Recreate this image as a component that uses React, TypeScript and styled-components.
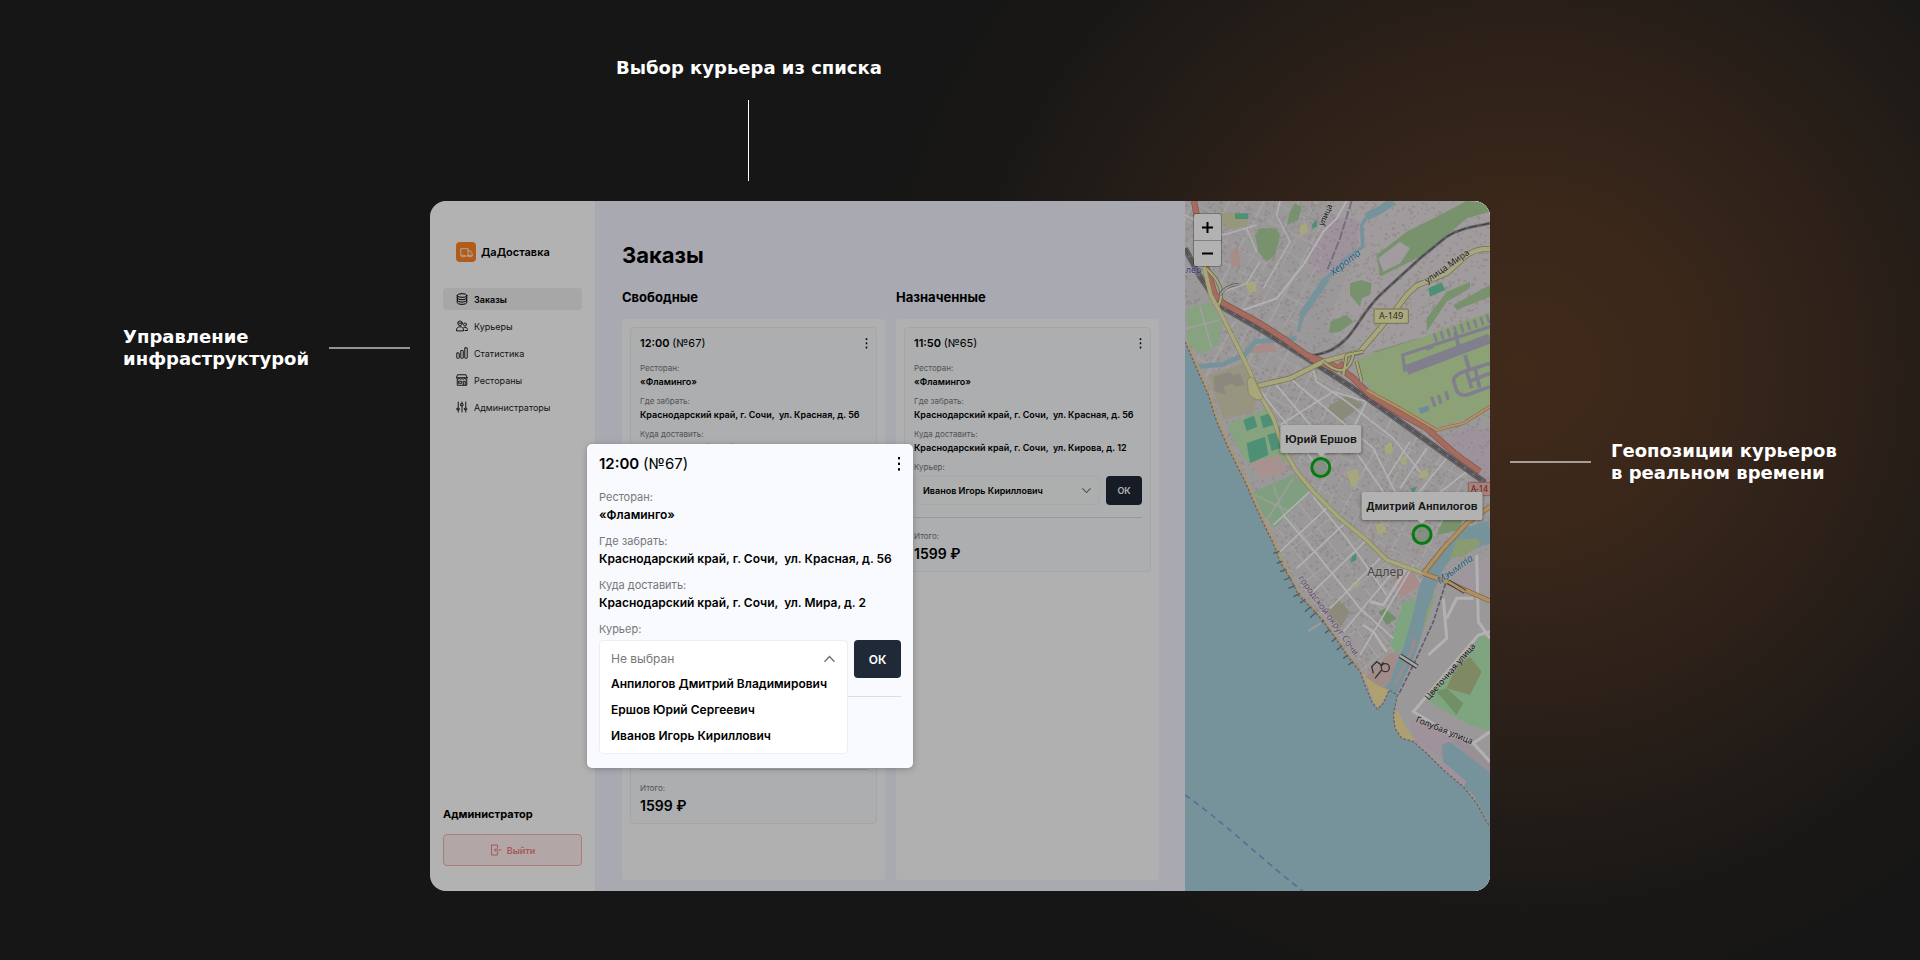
import React from "react";
import styled, { createGlobalStyle } from "styled-components";

const GlobalStyle = createGlobalStyle`
  *, *::before, *::after { box-sizing: border-box; }
  body {
    margin: 0;
    background: #161616;
    font-family: Inter, "Liberation Sans", sans-serif;
    color: #000;
  }
  button, select { font-family: inherit; }
  h1, h2, h3, p, dl, dd, ul { margin: 0; padding: 0; }
  ul { list-style: none; }
`;

/* ---------- page and callouts ---------- */

const Page = styled.main`
  min-height: 100vh;
  display: grid;
  grid-template-columns: minmax(0, 1fr) minmax(0, 1060px) minmax(0, 1fr);
  grid-template-rows: 201px auto;
  padding-bottom: 69px;
  background:
    radial-gradient(ellipse 700px 680px at 1520px 370px, #402a1a 0%, #3a271a 25%, rgba(52, 36, 26, 0.72) 50%, rgba(32, 27, 23, 0.4) 78%, rgba(22, 22, 22, 0) 100%),
    #161616;
`;

const CalloutText = styled.p`
  color: #fff;
  font-family: "DejaVu Sans", sans-serif;
  font-size: 18px;
  font-weight: 700;
  line-height: 22px;
  white-space: nowrap;
`;

const CalloutRule = styled.span<{ $vertical?: boolean }>`
  flex: none;
  width: ${(p) => (p.$vertical ? "1px" : "81px")};
  height: ${(p) => (p.$vertical ? "81px" : "2px")};
  background: ${(p) => (p.$vertical ? "#fff" : "rgba(255, 255, 255, 0.55)")};
`;

const TopCallout = styled.aside`
  grid-column: 2;
  justify-self: start;
  align-self: end;
  display: flex;
  flex-direction: column;
  align-items: center;
  gap: 21px;
  margin-left: 186px;
  padding-bottom: 20px;
`;

const SideCallout = styled.aside<{ $side: "left" | "right" }>`
  grid-row: 2;
  grid-column: ${(p) => (p.$side === "left" ? 1 : 3)};
  justify-self: ${(p) => (p.$side === "left" ? "end" : "start")};
  align-self: start;
  display: flex;
  align-items: center;
  gap: 20px;
  margin: ${(p) => (p.$side === "left" ? "125px 20px 0 0" : "239px 0 0 20px")};
`;

/* ---------- application window ---------- */

const Window = styled.section`
  grid-column: 2;
  grid-row: 2;
  position: relative;
  display: grid;
  grid-template-columns: 165px minmax(0, 1fr) 305px;
  min-height: 690px;
  border-radius: 16px;
  overflow: hidden;
  background: #fff;
`;

const Shade = styled.div`
  position: absolute;
  inset: 0;
  background: rgba(0, 0, 0, 0.3);
`;

/* ---------- sidebar ---------- */

const Sidebar = styled.div`
  display: flex;
  flex-direction: column;
  padding: 41px 13px 25px;
`;

const Brand = styled.a`
  display: flex;
  align-items: center;
  gap: 5px;
  padding-left: 13px;
  color: #000;
  font-size: 11px;
  font-weight: 600;
  line-height: 20px;
  text-decoration: none;
`;

const BrandMark = styled.span`
  display: grid;
  place-items: center;
  width: 20px;
  height: 20px;
  border-radius: 4px;
  background: #ff8526;
`;

const Nav = styled.nav`
  display: flex;
  flex-direction: column;
  gap: 5px;
  margin-top: 26px;
`;

const NavItem = styled.a<{ $active?: boolean }>`
  display: flex;
  align-items: center;
  gap: 6px;
  height: 22px;
  padding: 0 13px;
  border-radius: 4px;
  background: ${(p) => (p.$active ? "#efefef" : "transparent")};
  color: ${(p) => (p.$active ? "#000" : "#222")};
  font-size: 9px;
  font-weight: ${(p) => (p.$active ? 600 : 400)};
  text-decoration: none;
`;

const Account = styled.div`
  display: flex;
  flex-direction: column;
  gap: 12px;
  margin-top: auto;
`;

const AccountName = styled.p`
  font-size: 11px;
  font-weight: 700;
  line-height: 16px;
`;

const LogoutButton = styled.button`
  display: flex;
  align-items: center;
  justify-content: center;
  gap: 5px;
  height: 32px;
  border: 1px solid #f7b0b2;
  border-radius: 4px;
  background: #ffeeee;
  color: #ee8080;
  font-size: 9px;
  font-weight: 600;
`;

/* ---------- orders ---------- */

const Orders = styled.div`
  display: flex;
  flex-direction: column;
  padding: 40px 26px 11px 27px;
  background: #f2f2ff;
`;

const Title = styled.h1`
  font-size: 22px;
  font-weight: 700;
  line-height: 28px;
`;

const Board = styled.div`
  flex: 1;
  display: grid;
  grid-template-columns: 1fr 1fr;
  gap: 11px;
  margin-top: 18px;
`;

const Column = styled.section`
  display: flex;
  flex-direction: column;
`;

const ColumnTitle = styled.h2`
  font-size: 13px;
  font-weight: 700;
  line-height: 20px;
`;

const Lane = styled.div`
  flex: 1;
  display: flex;
  flex-direction: column;
  margin-top: 12px;
  padding: 8px;
  border-radius: 4px;
  background: #fdfdfd;
`;

const Card = styled.article<{ $tall?: boolean }>`
  display: flex;
  flex-direction: column;
  min-height: ${(p) => (p.$tall ? "497px" : "0")};
  padding: 7px 8px 6px 9px;
  border: 1px solid #ebedf0;
  border-radius: 4px;
  background: #f6f9fb;
`;

const Modal = styled.article`
  position: absolute;
  left: 157px;
  top: 243px;
  width: 326px;
  min-height: 324px;
  padding: 10px 12px 14px;
  border-radius: 5px;
  background: #f8fafd;
  box-shadow: 0 1px 6px rgba(0, 0, 0, 0.25);
`;

const CardHead = styled.header`
  display: flex;
  align-items: center;
  justify-content: space-between;
`;

const OrderTime = styled.h3<{ $large?: boolean }>`
  font-size: ${(p) => (p.$large ? "15px" : "11px")};
  font-weight: 600;
  line-height: ${(p) => (p.$large ? "20px" : "16px")};
`;

const OrderNumber = styled.span`
  font-weight: 400;
`;

const MoreButton = styled.button`
  display: grid;
  padding: 0;
  border: 0;
  background: none;
`;

const Details = styled.dl<{ $large?: boolean }>`
  display: flex;
  flex-direction: column;
  gap: ${(p) => (p.$large ? "8px" : "5px")};
  margin-top: ${(p) => (p.$large ? "14px" : "10px")};
  line-height: ${(p) => (p.$large ? "18px" : "14px")};
`;

const Term = styled.dt<{ $large?: boolean }>`
  color: #767779;
  font-size: ${(p) => (p.$large ? "11px" : "8px")};
`;

const Value = styled.dd<{ $large?: boolean }>`
  font-size: ${(p) => (p.$large ? "12px" : "9px")};
  font-weight: 600;
  white-space: pre;
`;

const CourierLabel = styled.label<{ $large?: boolean }>`
  display: block;
  margin-top: ${(p) => (p.$large ? "8px" : "5px")};
  color: #767779;
  font-size: ${(p) => (p.$large ? "11px" : "8px")};
  line-height: ${(p) => (p.$large ? "18px" : "14px")};
`;

const CourierRow = styled.div`
  display: flex;
  align-items: flex-start;
  gap: 6px;
  margin-top: 2px;
`;

const Picker = styled.div<{ $large?: boolean }>`
  position: relative;
  flex: 1;
  border: 1px solid ${(p) => (p.$large ? "#eceef1" : "#f0f2f4")};
  border-radius: 4px;
  background: ${(p) => (p.$large ? "#fff" : "#f8f9fa")};

  svg {
    position: absolute;
    right: ${(p) => (p.$large ? "12px" : "8px")};
    top: ${(p) => (p.$large ? "14px" : "10px")};
    pointer-events: none;
  }
`;

const CourierSelect = styled.select<{ $large?: boolean }>`
  display: block;
  width: 100%;
  height: ${(p) => (p.$large ? "34px" : "27px")};
  padding: 0 ${(p) => (p.$large ? "11px" : "8px")};
  border: 0;
  background: transparent;
  appearance: none;
  color: ${(p) => (p.$large ? "#767779" : "#000")};
  font-size: ${(p) => (p.$large ? "12px" : "9px")};
  font-weight: ${(p) => (p.$large ? 400 : 600)};
`;

const Options = styled.ul`
  margin-top: -4px;
  padding-bottom: 4px;
`;

const Option = styled.li`
  padding: 0 11px;
  font-size: 12px;
  font-weight: 600;
  line-height: 26px;
`;

const ConfirmButton = styled.button<{ $large?: boolean }>`
  width: ${(p) => (p.$large ? "47px" : "36px")};
  height: ${(p) => (p.$large ? "38px" : "29px")};
  padding: 0;
  border: 0;
  border-radius: 4px;
  background: #1f2937;
  color: #fff;
  font-size: ${(p) => (p.$large ? "12px" : "9px")};
  font-weight: 600;
`;

const Total = styled.dl`
  margin-top: auto;
  line-height: 14px;
`;

const Divider = styled.div`
  height: 1px;
  margin: 12px 0 11px;
  background: #d9dbdd;
`;

const ModalDivider = styled.hr`
  position: absolute;
  left: 261px;
  right: 12px;
  top: 252px;
  height: 1px;
  margin: 0;
  border: 0;
  background: #dcdee1;
`;

const Price = styled.dd`
  font-size: 14px;
  font-weight: 600;
  line-height: 22px;
`;

/* ---------- map ---------- */

const MapPanel = styled.div`
  position: relative;
  overflow: hidden;
  background: #aad3df;

  & > svg { display: block; }
`;

const ZoomControl = styled.div`
  position: absolute;
  left: 9px;
  top: 13px;
  display: flex;
  flex-direction: column;
  width: 27px;
  border-radius: 2px;
  background: #fff;
  box-shadow: 0 0 0 1px rgba(0, 0, 0, 0.25);
`;

const ZoomButton = styled.button`
  display: grid;
  place-items: center;
  height: 26px;
  padding: 0;
  border: 0;
  background: none;

  & + & { border-top: 1px solid #b8b8b8; }
`;

const Pin = styled.div<{ $x: number; $y: number }>`
  position: absolute;
  left: ${(p) => p.$x}px;
  top: ${(p) => p.$y}px;
  display: flex;
  flex-direction: column;
  align-items: center;
  gap: 4px;
  transform: translate(-50%, -100%);
`;

const PinLabel = styled.span`
  position: relative;
  padding: 0 5px;
  border-radius: 2px;
  background: #fff;
  box-shadow: 0 1px 3px rgba(0, 0, 0, 0.4);
  font-family: "Liberation Sans", sans-serif;
  font-size: 11px;
  font-weight: 700;
  line-height: 28px;
  white-space: nowrap;
  color: #222;

  &::after {
    content: "";
    position: absolute;
    left: 50%;
    bottom: -4px;
    margin-left: -5px;
    border: 5px solid transparent;
    border-top-color: #fff;
    border-bottom: 0;
  }
`;

const PinDot = styled.span`
  width: 21px;
  height: 21px;
  border: 3px solid #0ab018;
  border-radius: 50%;
  background: rgba(60, 150, 60, 0.2);
`;

/* ---------- icons ---------- */

const iconProps = {
  width: 12,
  height: 12,
  viewBox: "0 0 24 24",
  fill: "none",
  stroke: "currentColor",
  strokeWidth: 2,
  strokeLinecap: "round" as const,
  strokeLinejoin: "round" as const,
  "aria-hidden": true,
};

const StackIcon = () => (
  <svg {...iconProps}>
    <ellipse cx="12" cy="5" rx="9.5" ry="3.6" />
    <path d="M2.500 5v14c0 2 4 3.700 9.500 3.700s9.500-1.700 9.500-3.700V5M2.500 9.700c0 2 4 3.600 9.500 3.600s9.500-1.600 9.500-3.600M2.500 14.400c0 2 4 3.600 9.500 3.600s9.500-1.600 9.500-3.600" />
  </svg>
);
const PeopleIcon = () => (
  <svg {...iconProps}>
    <circle cx="8" cy="6.500" r="4.500" />
    <path d="M1 21v-1c0-4 3-6.500 7-6.500s7 2.500 7 6.500v1zM4 5.500c2 1.500 5.500 1.500 8 0" />
    <circle cx="18" cy="9" r="3" />
    <path d="M15.500 15c3-1.500 7.500.5 7.500 4v2h-5" />
  </svg>
);
const BarsIcon = () => (
  <svg {...iconProps}>
    <rect x="1.500" y="12" width="5" height="10.500" rx="1" />
    <rect x="9.500" y="7" width="5" height="15.500" rx="1" />
    <rect x="17.500" y="1.500" width="5" height="21" rx="1" />
  </svg>
);
const StoreIcon = () => (
  <svg {...iconProps}>
    <path d="M2.500 11v11.500h19V11M4 1.500h16l2.500 6H1.500zM1.500 7.500c0 4 5 4 5.200 0 .2 4 5.200 4 5.300 0 .1 4 5.100 4 5.300 0 .2 4 5.200 4 5.200 0M14.500 22v-7.500h4V22M5.500 14.500h6v4h-6z" />
  </svg>
);
const SlidersIcon = () => (
  <svg {...iconProps}>
    <path d="M4.500 2v11M4.500 18v4M12 2v3M12 10v12M19.500 2v11M19.500 18v4M2.500 14.500h4v3h-4zM10 5.500h4v4h-4zM17.500 14.500h4v3h-4z" />
  </svg>
);
const TruckIcon = () => (
  <svg {...iconProps} width={13} height={13} stroke="#fff" strokeWidth={1.600}>
    <path d="M4 18.500H1.500V5h13.500v13.500H8.500M15 9h4l3.500 4.500v5H20M15 18.500h1" />
    <circle cx="6.200" cy="18.500" r="2" />
    <circle cx="18" cy="18.500" r="2" />
  </svg>
);
const ExitIcon = () => (
  <svg {...iconProps}>
    <path d="M15 8V2H3v20h12v-6M22 12H9M12 9l-3 3 3 3" />
  </svg>
);
const DotsIcon = ({ large }: { large?: boolean }) => (
  <svg width={large ? 4 : 3} height={large ? 14 : 11} viewBox="0 0 4 14" aria-hidden="true">
    <rect x="1" y="0" width="2" height="2.400" />
    <rect x="1" y="5.600" width="2" height="2.400" />
    <rect x="1" y="11.200" width="2" height="2.400" />
  </svg>
);
const Chevron = ({ up }: { up?: boolean }) => (
  <svg width={up ? 11 : 9} height={up ? 8 : 7} viewBox="0 0 11 7" fill="none" stroke="#6d6f73" strokeWidth="1.300" aria-hidden="true">
    <path d={up ? "M.5 6.200 5.500 1l5 5.200" : "M.5.8l5 5.200 5-5.200"} />
  </svg>
);

/* ---------- map drawing ---------- */

const COAST =
  "M15 440 50 520 85 600 110 680 150 770 195 860 225 930 250 985 280 1045 300 1100 330 1150 355 1200 395 1240 430 1280 470 1335 500 1380 540 1430 555 1470 575 1520 592 1543 610 1525 628 1485 652 1500 640 1560 645 1600 665 1630 700 1640 740 1675 790 1725 850 1775 890 1825 920 1880 930 1895";
const LAND = COAST + "V18H15Z";

/* Deterministic scatter of small building footprints. */
const makeBuildings = () => {
  let seed = 7;
  const next = () => {
    seed = (seed * 16807) % 2147483647;
    return seed / 2147483647;
  };
  let d = "";
  for (let i = 0; i < 5200; i++) {
    const x = Math.round(15 + next() * 915);
    const y = Math.round(18 + next() * 1700);
    const w = 3 + Math.round(next() * 5);
    const h = 3 + Math.round(next() * 4);
    d += `M${x} ${y}l${w} ${Math.round(w / 2)}l${-Math.round(h / 2)} ${h}l${-w} ${-Math.round(w / 2)}z`;
  }
  return d;
};
const BUILDINGS = makeBuildings();

const RAIL_MAIN = "M15 160 60 245 120 332 250 408 370 483 520 580 640 665 800 780 915 862";
const RAIL_BRANCH = "M370 483C440 480 470 460 500 430 530 400 550 350 600 300L720 190 800 125C840 100 880 95 930 85";
const MOTORWAY = "M42 18 52 70 80 220 105 300 130 325 240 385 310 430 380 480 480 520 520 550 570 600 650 650 740 700 830 780 900 830";
const SECONDARY =
  "M72 215 92 300 125 360 170 450 205 520 240 600 280 670 310 760 350 830 400 890 480 970 560 1035 620 1095 730 1135";
const SECONDARY_2 = "M215 577 330 550 430 500 540 470 600 400 650 340 680 300 710 272 800 235 850 190Q880 160 930 162";

const TownMap = () => (
  <svg width="100%" height="690" viewBox="15 18 915 2070" preserveAspectRatio="xMidYMin slice" role="img" aria-label="Карта города Адлер">
    <defs>
      <clipPath id="land"><path d={LAND} /></clipPath>
      <pattern id="gridNorth" width="92" height="58" patternUnits="userSpaceOnUse" patternTransform="rotate(28)">
        <path d="M0 0H92M0 0V58M48 0V58" stroke="#fff" strokeWidth="4" fill="none" />
      </pattern>
      <pattern id="gridSouth" width="104" height="48" patternUnits="userSpaceOnUse" patternTransform="rotate(52)">
        <path d="M0 0H104M0 0V48" stroke="#fff" strokeWidth="5" fill="none" />
      </pattern>
    </defs>
    <rect x="15" y="18" width="915" height="2070" fill="#aad3df" />
    <path d={LAND} fill="#dedadb" />
    <g clipPath="url(#land)">
      <path d="M440 18H930V420L720 430 560 470 470 430 440 380 520 200Z" fill="#e6e0e2" />
      <path d="M450 60 540 80 520 190 420 240 370 190Z" fill="#e3d3e0" />
      <path d="M15 18H440L420 240 350 410 120 330 15 170Z" fill="url(#gridNorth)" opacity=".5" />
      <path d="M15 330 120 350 380 490 540 600 860 830 930 1000 740 1130 560 1040 340 820 240 600 60 540Z" fill="url(#gridNorth)" opacity=".5" />
      <path d="M230 930 390 890 560 1040 740 1130 690 1330 550 1450 280 1050Z" fill="url(#gridSouth)" opacity=".5" />
      <path d="M850 700H930V870L760 770Z" fill="#e3d3e0" />
      <path d={BUILDINGS} fill="#c9bcb6" opacity=".6" />

      <g fill="#add19e">
        <path d="M240 100 290 100 300 125 285 180 260 200 235 170 225 120Z" />
        <path d="M345 25 365 35 355 75 320 90 330 50Z" />
        <path d="M510 265 545 255 575 265 570 300 545 310 540 335 510 300Z" />
        <path d="M590 180 680 110 780 60 860 18 930 25V50L860 70 740 175 600 245Z" />
        <path d="M740 370 800 290 870 260 870 280 800 320 740 410Z" />
        <path d="M820 330 930 270V305L830 345Z" />
        <path d="M450 380 500 360 520 380 480 410 450 415Z" />
        <path d="M580 470 715 430 715 445 590 475Z" />
        <path d="M790 975 850 960 840 1005 770 1020Z" />
      </g>
      <path d="M595 190 660 140 690 160 660 205 610 230Z" fill="#e9dfe4" />
      <path d="M120 55 170 50 200 70 200 95 140 100Z" fill="#dcd9b0" />
      <path d="M20 340 90 320 125 380 115 450 60 480 22 440Z" fill="#c0e8b5" />
      <path d="M20 400 118 375M60 335 95 460" stroke="#e9e6e4" strokeWidth="5" />
      <path d="M85 540 190 505 235 605 220 650 130 675Z" fill="#d9d6b8" />
      <path d="M100 545 150 530 170 560 130 575 140 600 105 590ZM140 545 180 535 195 570 165 575Z" fill="#c9c3b4" />
      <path d="M140 690 260 640 300 700 320 800 240 830 190 790Z" fill="#c0e8b5" />
      <path d="M210 800 300 780 320 830 240 850Z" fill="#efd1cd" />
      <path d="M220 890 340 840 395 885 285 1000 240 950Z" fill="#b8e3b8" />
      <path d="M225 900 350 960M250 990 340 850M280 870 320 990" stroke="#e2e6dc" strokeWidth="4" />
      <g fill="#6fcfa9">
        <path d="M190 675 222 662 232 695 200 708ZM240 665 270 655 285 688 250 700ZM200 745 255 725 265 780 210 805ZM262 720 300 708 300 760 275 768Z" />
        <path d="M745 280 785 262 795 285 750 305ZM165 55 205 55 205 72 165 72ZM395 90 410 72 412 92 398 102Z" />
        <path d="M690 880 712 875 700 895ZM515 1085 530 1075 528 1095 512 1105ZM672 1270 700 1240 705 1260 680 1295Z" />
      </g>
      <path d="M150 175 175 160 180 205 155 225ZM205 455 280 440 290 470 220 475Z" fill="#efc9c4" />
      <path d="M440 640 500 600 550 630 480 680ZM440 1250 470 1210 510 1250 480 1300Z" fill="#c9c6b0" />
      <path d="M595 1250 615 1240 650 1270 620 1290Z" fill="#a3cf95" />
      <path d="M640 1130 700 1125 720 1170 660 1210Z" fill="#efc9c4" />
      <path d="M670 1220 720 1215 690 1330 650 1380 630 1350Z" fill="#b5ecb6" />
      <path d="M500 830 530 820 540 850 515 880ZM615 750 635 740 638 775 615 780ZM660 790 680 780 680 810 665 810ZM720 830 745 822 745 850 715 850ZM585 990 610 980 620 1010 595 1020ZM360 90 380 85 385 110 360 125ZM515 1165 545 1160 530 1180ZM195 265 225 258 232 290 205 292Z" fill="#efeeb4" />

      <path d="M520 500 600 468 720 430 930 350V630L850 675 770 695 580 590 540 540Z" fill="#c9e8a9" />
      <g fill="none" stroke="#b9b7cc" strokeLinejoin="round">
        <path d="M680 525 930 430" strokeWidth="30" />
        <path d="M675 530 668 480 930 395" strokeWidth="10" />
        <path d="M740 465 760 455M770 440l-8-25M790 433l-8-25M810 426l-8-25M830 419l-8-25M850 412l-8-25M870 405l-8-25M890 398l-8-25M910 391l-8-25M928 384l-8-25" strokeWidth="8" />
        <path d="M825 410 840 470M855 480 870 530" strokeWidth="12" />
        <path d="M930 505 850 530Q810 545 825 570 830 605 860 600L930 575M865 560 930 535M860 530l15 50M885 520l14 58" strokeWidth="11" />
        <path d="M755 605l10 30M775 600l8 26M797 588l8 26" strokeWidth="10" />
      </g>
      <path d="M715 640 745 632 748 648 722 656Z" fill="#a3c5e0" />

      <g fill="none" stroke="#aad3df" strokeLinejoin="round">
        <path d="M640 18 600 45 560 65" strokeWidth="24" />
        <path d="M565 60 545 90 548 155 500 190 440 250 400 310 370 350 355 410" strokeWidth="11" />
        <path d="M440 250 400 310 365 360" strokeWidth="20" />
        <path d="M350 430 290 435 225 440 195 478 130 508 50 515" strokeWidth="15" />
        <path d="M930 1000 860 1020 810 1060 770 1110 740 1180 722 1260 705 1320 690 1370 655 1430 630 1500" strokeWidth="46" />
        <path d="M930 1030 870 1050" strokeWidth="30" />
      </g>
      <path d="M740 1250 765 1190 778 1240 745 1310 725 1325Z" fill="#c6e6a3" />
      <path d="M830 1035 890 1030 905 1045 850 1085 810 1090Z" fill="#c8dfa3" />
      <path d="M690 1370 700 1320 708 1345 690 1385 650 1470 640 1470Z" fill="#dcc9c6" />
      <path d="M700 1395 790 1130 930 1060V1900H650V1500Z" fill="#dddadb" />
      <path d="M830 1165 860 1120 930 1080V1170L860 1200Z" fill="#e5d8e3" />
      <path d="M850 1400 900 1320 930 1330V1610L870 1590 730 1510Z" fill="#b5ecb6" />
      <path d="M830 1410 870 1385 905 1430 870 1500 800 1480Z" fill="#b6c590" />
      <path d="M770 1490 800 1480 850 1525 830 1560Z" fill="#a3cf95" />
      <path d="M690 1570 800 1590 830 1610 790 1690 700 1640Z" fill="#e5d2e1" />
      <path d="M785 1650 810 1640 930 1730V1890L880 1800 790 1720Z" fill="#aad3df" />
      <path d="M790 1700 860 1760 850 1775 770 1710Z" fill="#e5d2e1" />
      <path d="M815 1640 930 1735V1700L830 1615Z" fill="#dccfd8" />

      <g fill="none" stroke="#fff" strokeWidth="6">
        <path d="M500 18 470 70 430 110 370 210 290 310 190 345" />
        <path d="M130 290 200 265 240 200M300 18 290 60 330 140 250 280M200 100 230 170M15 60 130 120 230 90" strokeWidth="4" />
        <path d="M230 575 330 700 400 800M280 560 400 700 450 830M330 550 450 650 580 760 650 900 730 960M300 690 460 590 560 620 480 780M390 490 410 560 500 620 640 730 720 830M520 760 610 890M690 740 620 850M740 760 660 880M800 790 710 900M860 830 770 900" strokeWidth="5" />
        <path d="M280 990 400 880M300 1070 450 930M350 1120 500 980M400 1190 560 1035M450 1240 600 1090M490 1310 640 1130M540 1380 700 1110M310 960 420 1090 540 1240 640 1330M400 905 500 1030 620 1200" strokeWidth="5" />
        <path d="M570 1220 610 1230 680 1120M550 1290 580 1310 620 1370" strokeWidth="8" />
        <path d="M930 1310 895 1320 700 1550 800 1610 880 1645 930 1700M890 1080 895 1280 930 1330M800 1270 830 1210 880 1210M790 1210 800 1330 745 1380M880 1645 930 1610" strokeWidth="9" />
        <path d="M430 1280 385 1310" strokeWidth="8" />
      </g>

      <g fill="none" strokeLinejoin="round">
        <path d={RAIL_MAIN} stroke="#8d8a8e" strokeWidth="18" />
        <path d={RAIL_MAIN} stroke="#5c5a5e" strokeWidth="6" strokeDasharray="24 8" />
        <path d={RAIL_MAIN} stroke="#b7b4b8" strokeWidth="2" />
        <path d={RAIL_BRANCH} stroke="#8c8990" strokeWidth="9" />
        <path d={RAIL_BRANCH} stroke="#57555b" strokeWidth="3" strokeDasharray="24 12" />
        <path d="M515 18 480 130 440 230" stroke="#aaa0b0" strokeWidth="6" strokeDasharray="26 6" />
        <path d="M808 1130 760 1280 700 1410 655 1500" stroke="#8e80a0" strokeWidth="5" strokeDasharray="14 5" />
        <path d={MOTORWAY} stroke="#c0776b" strokeWidth="19" />
        <path d={MOTORWAY} stroke="#ee9a88" strokeWidth="15" />
        <path d="M390 490 470 525 490 500" stroke="#ee9a88" strokeWidth="16" />
        <path d="M560 585 660 640 770 705 850 685 930 635" stroke="#c99b5c" strokeWidth="10" />
        <path d="M560 585 660 640 770 705 850 685 930 635" stroke="#fbd49a" strokeWidth="6" />
        <path d={SECONDARY_2} stroke="#a19f73" strokeWidth="17" />
        <path d={SECONDARY_2} stroke="#f1efb0" strokeWidth="13" />
        <path d="M72 215Q150 280 110 340M430 500Q500 560 520 480M490 540 500 480 550 470M530 500 545 560" stroke="#8d8b64" strokeWidth="11" />
        <path d="M72 215Q150 280 110 340M430 500Q500 560 520 480M490 540 500 480 550 470M530 500 545 560" stroke="#f1efb0" strokeWidth="7" />
        <path d={SECONDARY} stroke="#b5b27e" strokeWidth="14" />
        <path d={SECONDARY} stroke="#f1efb0" strokeWidth="11" />
        <path d="M120 300Q135 272 175 268" stroke="#7b7a7a" strokeWidth="9" />
        <path d="M120 300Q135 272 175 268" stroke="#ddd" strokeWidth="5" />
        <path d="M730 1135 790 1060 860 985 930 935M730 1135 800 1160 930 1218" stroke="#b98a50" strokeWidth="15" />
        <path d="M730 1135 790 1060 860 985 930 935M730 1135 800 1160 930 1218" stroke="#fbcf8f" strokeWidth="11" />
        <path d="M805 1160 855 1190M660 1382 712 1415" stroke="#4d4a48" strokeWidth="14" />
        <path d="M805 1160 855 1190" stroke="#fbcf8f" strokeWidth="9" />
        <path d="M660 1382 712 1415" stroke="#eee" strokeWidth="8" />
      </g>
      <path d="M202 560Q205 540 222 550L250 610Q230 625 205 595Z" fill="#f1efb0" stroke="#b5b27e" strokeWidth="2" />
      <path d="M15 440 50 520 85 600 110 680 150 770 195 860 225 930 250 985 280 1045 300 1100 330 1150" fill="none" stroke="#efd9a8" strokeWidth="18" />
      <path d="M330 1150 355 1200 395 1240 430 1280 470 1335 500 1380 540 1430" fill="none" stroke="#e8cfa4" strokeWidth="12" />
      <path d="M545 1430 600 1475 628 1485 592 1543Z" fill="#fbe5a4" />
      <path d="M652 1545 680 1600 705 1635 665 1630 640 1600 640 1560Z" fill="#fbe5a4" />
      <path d="M555 1445 630 1375 660 1375 625 1470 600 1475Z" fill="#e9c9c6" />
      <g fill="none" stroke="#4b4746" strokeWidth="4">
        <path d="M580 1435l-5-20 15-15 15 10 5-8M585 1450l20-25M600 1412l12-8" />
        <circle cx="616" cy="1418" r="12" />
      </g>
    </g>
    <path d={COAST} fill="none" stroke="#a58b8b" strokeWidth="4" strokeDasharray="8 5" />
    <path d="M280 1075l18-6M290 1105l18-6M300 1130l20-6M312 1155l20-8M325 1180l20-8M340 1205l20-10M360 1225l16-12M375 1250l16-14M390 1268l18-16M418 1290l14-14M435 1315l14-12M455 1340l14-12M470 1365l16-12M490 1390l14-10M505 1410l14-10" stroke="#6f8087" strokeWidth="4" />
    <path d="M385 1308 425 1283" stroke="#ddd" strokeWidth="7" />
    <path d="M15 1800C130 1880 230 1980 370 2090" fill="none" stroke="#7d9fd6" strokeWidth="5" strokeDasharray="18 14" />

    <g fill="#f4f2b8" stroke="#a8a56c" strokeWidth="3">
      <rect x="582" y="342" width="103" height="43" rx="3" />
      <rect x="865" y="862" width="90" height="40" rx="3" fill="#f3b9b4" stroke="#c98580" />
    </g>
    <g fontFamily="Noto Sans, sans-serif" fontSize="27" paintOrder="stroke" stroke="#fff" strokeOpacity=".45" strokeWidth="4">
      <text x="597" y="373" fill="#454530" strokeWidth="0">А-149</text>
      <text x="873" y="891" fill="#7b2f2b" fontSize="24" strokeWidth="0">А-14</text>
      <text x="0" y="0" fill="#222" fontSize="24" transform="translate(430 94) rotate(-66)">улица</text>
      <text x="0" y="0" fill="#33332a" transform="translate(742 266) rotate(-35)">улица Мира</text>
      <text x="0" y="0" fill="#3a83b5" fontStyle="italic" fontSize="30" transform="translate(460 244) rotate(-38)">Херота</text>
      <text x="17" y="233" fill="#5355b0" fontSize="27">лер</text>
      <text x="562" y="1144" fill="#666" fontSize="36">Адлер</text>
      <text x="0" y="0" fill="#3a83b5" fontStyle="italic" fontSize="30" transform="translate(780 1168) rotate(-36)">Мзымта</text>
      <text x="0" y="0" fill="#222" fontSize="26" transform="translate(746 1517) rotate(-49)">Цветочная улица</text>
      <text x="0" y="0" fill="#222" fontSize="26" transform="translate(706 1580) rotate(22)">Голубая улица</text>
      <text x="0" y="0" fill="#92719c" fontSize="27" transform="translate(354 1150) rotate(54)">городской округ Сочи</text>
    </g>
  </svg>
);

/* ---------- content ---------- */

const navItems = [
  { label: "Заказы", icon: <StackIcon />, active: true },
  { label: "Курьеры", icon: <PeopleIcon /> },
  { label: "Статистика", icon: <BarsIcon /> },
  { label: "Рестораны", icon: <StoreIcon /> },
  { label: "Администраторы", icon: <SlidersIcon /> },
];

const couriers = ["Анпилогов Дмитрий Владимирович", "Ершов Юрий Сергеевич", "Иванов Игорь Кириллович"];

type Order = { time: string; number: string; restaurant: string; from: string; to: string };

const freeOrder: Order = {
  time: "12:00",
  number: "(№67)",
  restaurant: "«Фламинго»",
  from: "Краснодарский край, г. Сочи,  ул. Красная, д. 56",
  to: "Краснодарский край, г. Сочи,  ул. Мира, д. 2",
};
const assignedOrder: Order = {
  time: "11:50",
  number: "(№65)",
  restaurant: "«Фламинго»",
  from: "Краснодарский край, г. Сочи,  ул. Красная, д. 56",
  to: "Краснодарский край, г. Сочи,  ул. Кирова, д. 12",
};

const OrderInfo = ({ order, large }: { order: Order; large?: boolean }) => (
  <>
    <CardHead>
      <OrderTime $large={large}>
        {order.time} <OrderNumber>{order.number}</OrderNumber>
      </OrderTime>
      <MoreButton type="button" aria-label="Действия с заказом">
        <DotsIcon large={large} />
      </MoreButton>
    </CardHead>
    <Details $large={large}>
      <div>
        <Term $large={large}>Ресторан:</Term>
        <Value $large={large}>{order.restaurant}</Value>
      </div>
      <div>
        <Term $large={large}>Где забрать:</Term>
        <Value $large={large}>{order.from}</Value>
      </div>
      <div>
        <Term $large={large}>Куда доставить:</Term>
        <Value $large={large}>{order.to}</Value>
      </div>
    </Details>
  </>
);

const OrderTotal = () => (
  <Total>
    <Divider />
    <Term>Итого:</Term>
    <Price>1599 ₽</Price>
  </Total>
);

export default function App() {
  return (
    <>
      <GlobalStyle />
      <Page>
        <TopCallout>
          <CalloutText>Выбор курьера из списка</CalloutText>
          <CalloutRule $vertical />
        </TopCallout>

        <SideCallout $side="left">
          <CalloutText>
            Управление
            <br />
            инфраструктурой
          </CalloutText>
          <CalloutRule />
        </SideCallout>

        <Window>
          <Sidebar>
            <Brand href="#home">
              <BrandMark>
                <TruckIcon />
              </BrandMark>
              ДаДоставка
            </Brand>
            <Nav>
              {navItems.map((item) => (
                <NavItem key={item.label} href="#section" $active={item.active}>
                  {item.icon}
                  {item.label}
                </NavItem>
              ))}
            </Nav>
            <Account>
              <AccountName>Администратор</AccountName>
              <LogoutButton type="button">
                <ExitIcon />
                Выйти
              </LogoutButton>
            </Account>
          </Sidebar>

          <Orders>
            <Title>Заказы</Title>
            <Board>
              <Column>
                <ColumnTitle>Свободные</ColumnTitle>
                <Lane>
                  <Card $tall>
                    <OrderInfo order={freeOrder} />
                    <OrderTotal />
                  </Card>
                </Lane>
              </Column>
              <Column>
                <ColumnTitle>Назначенные</ColumnTitle>
                <Lane>
                  <Card>
                    <OrderInfo order={assignedOrder} />
                    <CourierLabel htmlFor="courier-65">Курьер:</CourierLabel>
                    <CourierRow>
                      <Picker>
                        <CourierSelect id="courier-65" defaultValue={couriers[2]}>
                          {couriers.map((name) => (
                            <option key={name}>{name}</option>
                          ))}
                        </CourierSelect>
                        <Chevron />
                      </Picker>
                      <ConfirmButton type="button">ОК</ConfirmButton>
                    </CourierRow>
                    <OrderTotal />
                  </Card>
                </Lane>
              </Column>
            </Board>
          </Orders>

          <MapPanel>
            <TownMap />
            <ZoomControl>
              <ZoomButton type="button" aria-label="Приблизить">
                <svg width="11" height="11" viewBox="0 0 11 11" aria-hidden="true">
                  <path d="M5.500 0v11M0 5.500h11" stroke="#000" strokeWidth="2" />
                </svg>
              </ZoomButton>
              <ZoomButton type="button" aria-label="Отдалить">
                <svg width="11" height="11" viewBox="0 0 11 11" aria-hidden="true">
                  <path d="M0 5.500h11" stroke="#000" strokeWidth="2" />
                </svg>
              </ZoomButton>
            </ZoomControl>
            <Pin $x={136} $y={277}>
              <PinLabel>Юрий Ершов</PinLabel>
              <PinDot />
            </Pin>
            <Pin $x={237} $y={344}>
              <PinLabel>Дмитрий Анпилогов</PinLabel>
              <PinDot />
            </Pin>
          </MapPanel>

          <Shade />

          <Modal>
            <OrderInfo order={freeOrder} large />
            <CourierLabel htmlFor="courier-67" $large>
              Курьер:
            </CourierLabel>
            <ModalDivider />
            <CourierRow>
              <Picker $large>
                <CourierSelect id="courier-67" $large defaultValue="">
                  <option value="">Не выбран</option>
                  {couriers.map((name) => (
                    <option key={name}>{name}</option>
                  ))}
                </CourierSelect>
                <Chevron up />
                <Options>
                  {couriers.map((name) => (
                    <Option key={name}>{name}</Option>
                  ))}
                </Options>
              </Picker>
              <ConfirmButton type="button" $large>
                ОК
              </ConfirmButton>
            </CourierRow>
          </Modal>
        </Window>

        <SideCallout $side="right">
          <CalloutRule />
          <CalloutText>
            Геопозиции курьеров
            <br />
            в реальном времени
          </CalloutText>
        </SideCallout>
      </Page>
    </>
  );
}
